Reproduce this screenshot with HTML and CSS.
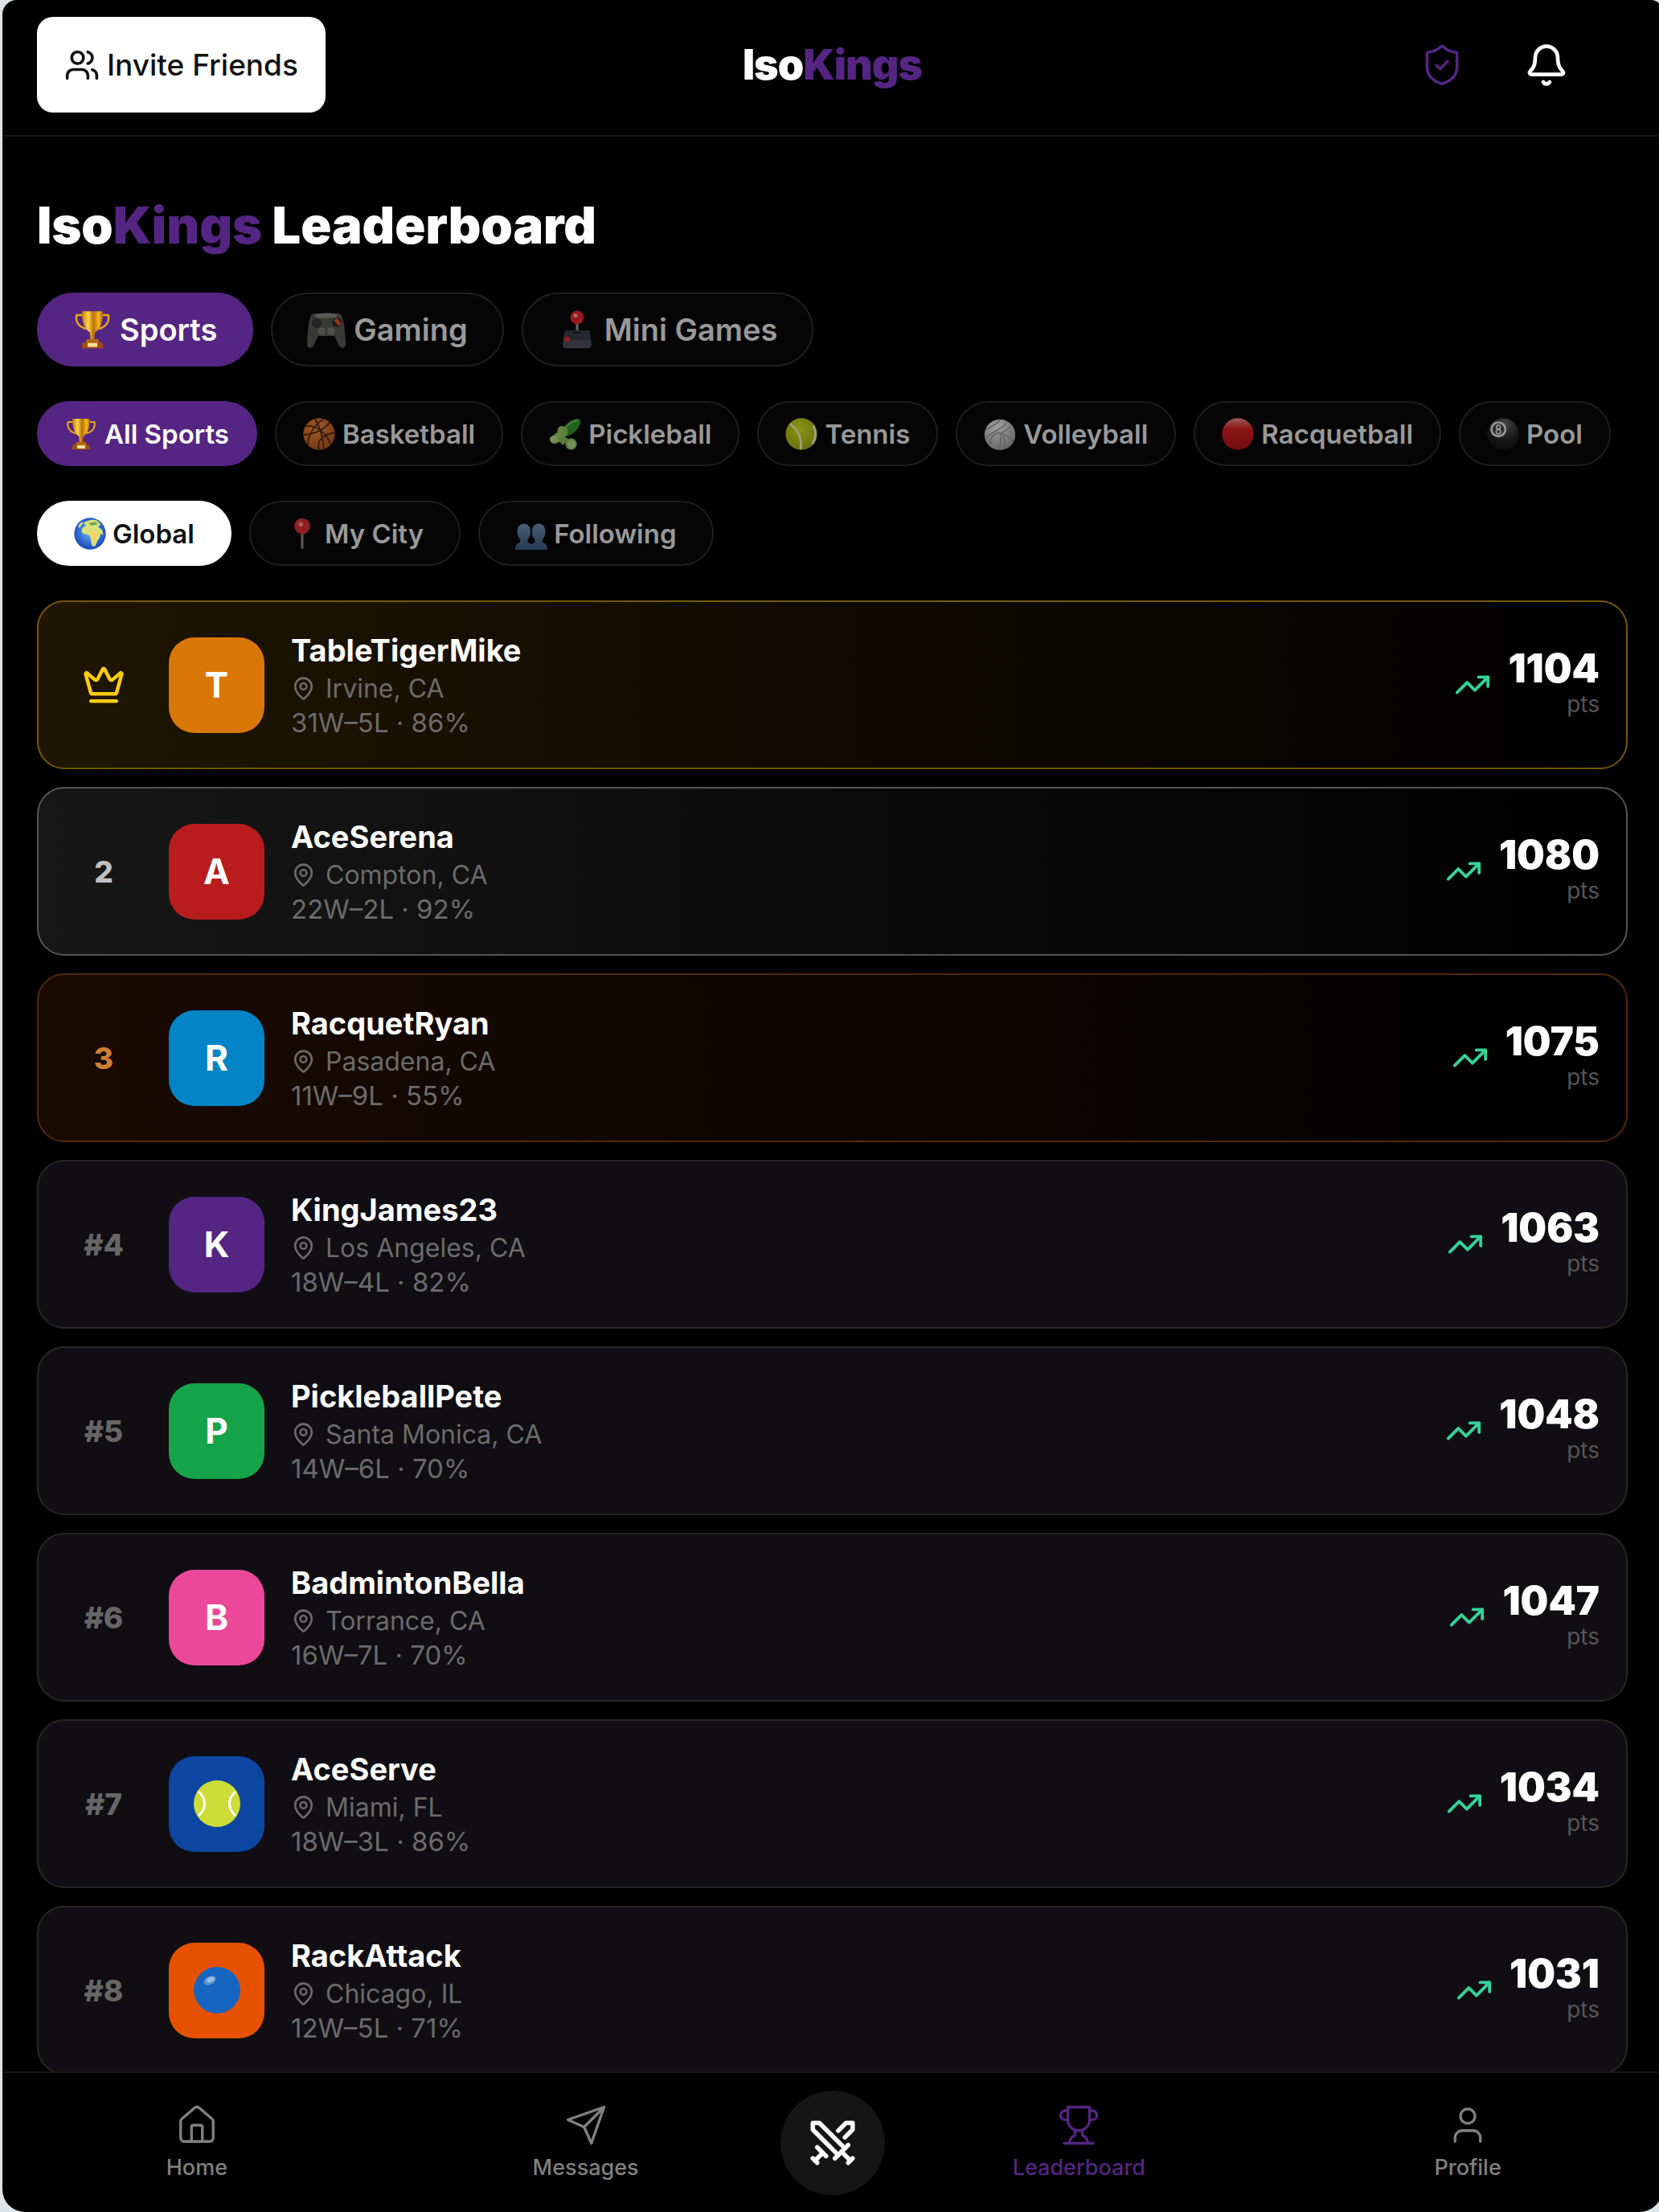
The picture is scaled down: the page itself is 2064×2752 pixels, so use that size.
FILE: index.html
```html
<!DOCTYPE html>
<html lang="en">
<head>
    <meta charset="UTF-8">
    <meta name="viewport" content="width=device-width, initial-scale=1.0">
    <title>IsoKings Leaderboard</title>
    <link rel="stylesheet" href="styles.css">
</head>
<body>

<!-- shared icons -->
<svg class="sprite" aria-hidden="true">
    <defs>
        <linearGradient id="gold" x1="0" x2="1" y1="0" y2="0">
            <stop offset="0" stop-color="#c27a06"/>
            <stop offset=".3" stop-color="#ffd54a"/>
            <stop offset=".55" stop-color="#b86f05"/>
            <stop offset=".8" stop-color="#f7b920"/>
            <stop offset="1" stop-color="#a85f04"/>
        </linearGradient>
        <linearGradient id="red" x1="0" x2="0" y1="0" y2="1">
            <stop offset="0" stop-color="#ee8a86"/>
            <stop offset=".35" stop-color="#d41c1e"/>
            <stop offset="1" stop-color="#b01014"/>
        </linearGradient>
        <linearGradient id="people" x1="0" x2="0" y1="0" y2="1">
            <stop offset="0" stop-color="#6f8fb0"/>
            <stop offset="1" stop-color="#37597b"/>
        </linearGradient>
        <radialGradient id="orange" cx=".4" cy=".35" r=".7">
            <stop offset="0" stop-color="#f08a3c"/>
            <stop offset="1" stop-color="#b2501a"/>
        </radialGradient>
        <radialGradient id="lime" cx=".45" cy=".35" r=".7">
            <stop offset="0" stop-color="#d2e21c"/>
            <stop offset="1" stop-color="#9aa812"/>
        </radialGradient>
        <radialGradient id="grey" cx=".4" cy=".25" r=".8">
            <stop offset="0" stop-color="#f2f2f2"/>
            <stop offset="1" stop-color="#9a9a9a"/>
        </radialGradient>
        <radialGradient id="black" cx=".55" cy=".2" r=".8">
            <stop offset="0" stop-color="#6a6a6a"/>
            <stop offset=".6" stop-color="#222"/>
            <stop offset="1" stop-color="#111"/>
        </radialGradient>
        <radialGradient id="ocean" cx=".5" cy=".45" r=".55">
            <stop offset="0" stop-color="#69b5ff"/>
            <stop offset="1" stop-color="#1746b8"/>
        </radialGradient>
    </defs>

    <symbol id="pin" viewBox="0 0 24 24">
        <path d="M20 10c0 4.993-5.539 10.193-7.399 11.799a1 1 0 0 1-1.202 0C9.539 20.193 4 14.993 4 10a8 8 0 0 1 16 0"/>
        <circle cx="12" cy="10" r="3"/>
    </symbol>
    <symbol id="trend" viewBox="0 0 24 24">
        <path d="M16 7h6v6"/>
        <path d="m22 7-8.500 8.500-5-5L2 17"/>
    </symbol>

    <symbol id="e-trophy" viewBox="0 0 24 24">
        <path d="M6.500 3H2.200c-.8 3.400.6 7 5.800 8.600M17.500 3h4.300c.8 3.400-.6 7-5.800 8.600" fill="none" stroke="#e8a61c" stroke-width="1.300"/>
        <path d="M5.500.6h13c.2 6.500-1.600 11-4.900 13.200l-.4 4.200h-2.400l-.4-4.200C7.100 11.600 5.300 7.100 5.500.6z" fill="url(#gold)"/>
        <path d="M8.500 18h7l1 2.500h-9z" fill="#b5680a"/>
        <path d="M6 20h12l.8 3.600H5.200z" fill="#a04f0a"/>
        <path d="M9 20.300h6v2.500H9z" fill="#ffdf9c"/>
    </symbol>
    <symbol id="e-gamepad" viewBox="0 0 24 24">
        <path d="M4.500 2h15c2.800 0 4 6 4.500 19 .1 2.800-3 3.400-4.200.8L17 16H7l-2.800 5.800C3 24.400-.1 23.800 0 21 .5 8 1.700 2 4.500 2z" fill="#55554f"/>
        <path d="M5 2.700C8 1.500 16 1.500 19 2.700l-1 2H6z" fill="#858580"/>
        <circle cx="6" cy="8" r="3" fill="#333"/>
        <circle cx="18.500" cy="7.500" r="3" fill="#2b2b2b"/>
        <circle cx="9" cy="13" r="2.400" fill="#77776f"/>
        <circle cx="15" cy="13" r="2.400" fill="#77776f"/>
        <path d="M17.500 5.500l3 3.500" stroke="#e2531b" stroke-width="2.200"/>
    </symbol>
    <symbol id="e-joystick" viewBox="0 0 24 24">
        <path d="M12 6v8" stroke="#9a9aa0" stroke-width="1.600"/>
        <path d="M4.500 12.500h15l1.500 8.500c0 1.800-.6 2.600-2 2.600H5c-1.400 0-2-.8-2-2.600z" fill="#4c4d57"/>
        <path d="M4.500 12.500h15l1 6h-17z" fill="#3a3b44"/>
        <path d="M9 14.500c0-1.600 6-1.600 6 0z" fill="#1d1d22"/>
        <circle cx="12" cy="4.500" r="4.200" fill="#e3272d"/>
        <circle cx="11" cy="3.300" r="1.300" fill="#ff9a96"/>
        <circle cx="5.800" cy="18" r="1.600" fill="#e3272d"/>
    </symbol>
    <symbol id="e-basketball" viewBox="0 0 24 24">
        <circle cx="12" cy="12" r="11.800" fill="url(#orange)"/>
        <path d="M.4 12.500C7 12.500 16 9 20 3.200M9 .6c3 5 6 13 6.500 22.800M2 6c7-1 16 5 18.500 14M3.500 20C4 13 8 6 15 .8M12 23.500C10 18 14 12 23.800 11" fill="none" stroke="#4a230d" stroke-width="1"/>
    </symbol>
    <symbol id="e-pickle" viewBox="0 0 24 24">
        <path d="M10 9.500C12 4.500 17 .5 22 .6c1.600.2 1.800 2 1.200 4C21.600 9 17 13 13 13.500z" fill="#2f8f2b"/>
        <path d="M12 8c2-3.500 6-6 9.500-6" stroke="#6cc250" stroke-width="1.200" fill="none"/>
        <path d="M9 6c3-.4 5.500 2 5 4.800-.3 2.200-1.800 3.200-2.600 4.400L6.500 12C6 9 6.500 6.500 9 6z" fill="#8cc75f"/>
        <path d="M7 10l5.500 5-6 3.500C3.500 20.500.2 18 .6 15.500c.3-2 2.200-2 3-2.800z" fill="#9fce6a"/>
        <circle cx="3.500" cy="15.500" r="2" fill="#bde08c"/>
        <path d="M9 12.500l5.500 3.300-4.300 4.700-3-4z" fill="#86bd55"/>
        <circle cx="16.500" cy="19.500" r="4.300" fill="#8cc75f"/>
        <circle cx="16.700" cy="19.700" r="2.700" fill="#b8dd86"/>
    </symbol>
    <symbol id="e-tennis" viewBox="0 0 24 24">
        <circle cx="12" cy="12" r="11.800" fill="url(#lime)"/>
        <path d="M3.500 4.500C10 9 12.500 15 11.500 23.500M21 5.500c2 4.500 1.800 9.500-.8 14" fill="none" stroke="#f0f3c8" stroke-width="1.600"/>
    </symbol>
    <symbol id="e-volleyball" viewBox="0 0 24 24">
        <circle cx="12" cy="12.500" r="11.500" fill="url(#grey)"/>
        <path d="M1 9c4-2 10-5 11-8M2 15c5-6 12-6 15-12M12 12c3-2 7-4 8-6M12 12c1 4 1 8-1 12M5 20c-1-4 1-8 7-9M12 12c4 0 9 3 10 6M15 23c1-3 1-6-1-10" fill="none" stroke="#949494" stroke-width=".9"/>
    </symbol>
    <symbol id="e-red" viewBox="0 0 24 24">
        <circle cx="12" cy="12" r="11.800" fill="url(#red)"/>
    </symbol>
    <symbol id="e-pool" viewBox="0 0 24 24">
        <circle cx="12" cy="12" r="11.800" fill="url(#black)"/>
        <circle cx="8.500" cy="8.500" r="5.200" fill="#444" stroke="#e6e6e6" stroke-width="1.600"/>
        <ellipse cx="8.500" cy="6.900" rx="1.400" ry="1.600" fill="none" stroke="#e6e6e6" stroke-width="1"/>
        <ellipse cx="8.500" cy="10.200" rx="1.600" ry="1.700" fill="none" stroke="#e6e6e6" stroke-width="1"/>
    </symbol>
    <symbol id="e-globe" viewBox="0 0 24 24">
        <circle cx="12" cy="12" r="11.800" fill="url(#ocean)"/>
        <path d="M7 4c3-2 7-3 10-2l3 3-2 2 3 2 1 4-2-1-1 3c-1 2-2 3-3 6-1 1-3 0-3-2l-1-5c-1-2-5-1-6-3-1-3 1-4 3-5z" fill="#d9e27a"/>
        <path d="M12 10l6 1-3 8-2-1z" fill="#f2d36b"/>
        <path d="M11 4l5-1 2 2-5 1z" fill="#6dab55"/>
        <path d="M3 6l3-3 1 1-3 4z" fill="#bcdc8c"/>
    </symbol>
    <symbol id="e-pushpin" viewBox="0 0 24 24">
        <path d="M12 9v13.500" stroke="#a08a86" stroke-width="1.700" stroke-linecap="round"/>
        <circle cx="12" cy="6.300" r="5.900" fill="#d92d32"/>
        <circle cx="11" cy="5" r="1.700" fill="#f58c8a"/>
    </symbol>
    <symbol id="e-people" viewBox="0 0 24 24">
        <path d="M6.500 4.500c3.100 0 5 2.600 5 6 0 2.800-1 4.600-2.200 5.700v2.300c1.500.6 2.200 1.100 2.700 1.600.5-.5 1.200-1 2.700-1.600v-2.300c-1.200-1.100-2.200-2.900-2.200-5.700 0-3.400 1.900-6 5-6s5 2.600 5 6c0 2.800-1 4.600-2.200 5.700v2.300c2.600 1 3.700 2 3.700 5.500H0c0-3.500 1.100-4.500 3.700-5.500v-2.300c-1.200-1.100-2.200-2.900-2.200-5.700 0-3.400 1.900-6 5-6z" fill="url(#people)"/>
    </symbol>
</svg>

<div class="app">

    <header class="topbar">
        <div class="topbar-side">
            <button class="invite" type="button">
                <svg class="icon" viewBox="0 0 24 24"><path d="M16 21v-2a4 4 0 0 0-4-4H6a4 4 0 0 0-4 4v2"/><circle cx="9" cy="7" r="4"/><path d="M22 21v-2a4 4 0 0 0-3-3.870"/><path d="M16 3.130a4 4 0 0 1 0 7.750"/></svg>
                Invite Friends
            </button>
        </div>
        <a class="logo" href="#">Iso<span>Kings</span></a>
        <div class="topbar-side topbar-actions">
            <button class="icon-btn shield" type="button" aria-label="Safety">
                <svg class="icon" viewBox="0 0 24 24"><path d="M20 13c0 5-3.500 7.500-7.660 8.950a1 1 0 0 1-.67-.01C7.500 20.500 4 18 4 13V6a1 1 0 0 1 1-1c2 0 4.500-1.200 6.240-2.720a1.170 1.170 0 0 1 1.520 0C14.510 3.810 17 5 19 5a1 1 0 0 1 1 1z"/><path d="m9 12 2 2 4-4"/></svg>
            </button>
            <button class="icon-btn bell" type="button" aria-label="Notifications">
                <svg class="icon" viewBox="0 0 24 24"><path d="M10.268 21a2 2 0 0 0 3.464 0"/><path d="M3.262 15.326A1 1 0 0 0 4 17h16a1 1 0 0 0 .740-1.673C19.410 13.956 18 12.499 18 8A6 6 0 0 0 6 8c0 4.499-1.411 5.956-2.738 7.326"/></svg>
            </button>
        </div>
    </header>

    <main class="content">
        <h1>Iso<span>Kings</span> Leaderboard</h1>

        <div class="chips chips-lg">
            <button class="chip on" type="button"><svg><use href="#e-trophy"/></svg>Sports</button>
            <button class="chip" type="button"><svg><use href="#e-gamepad"/></svg>Gaming</button>
            <button class="chip" type="button"><svg><use href="#e-joystick"/></svg>Mini Games</button>
        </div>

        <div class="chips chips-sport">
            <button class="chip on" type="button"><svg><use href="#e-trophy"/></svg>All Sports</button>
            <button class="chip" type="button"><svg><use href="#e-basketball"/></svg>Basketball</button>
            <button class="chip" type="button"><svg><use href="#e-pickle"/></svg>Pickleball</button>
            <button class="chip" type="button"><svg><use href="#e-tennis"/></svg>Tennis</button>
            <button class="chip" type="button"><svg><use href="#e-volleyball"/></svg>Volleyball</button>
            <button class="chip" type="button"><svg><use href="#e-red"/></svg>Racquetball</button>
            <button class="chip" type="button"><svg><use href="#e-pool"/></svg>Pool</button>
            <button class="chip" type="button" aria-label="More sports"></button>
        </div>

        <div class="chips">
            <button class="chip on-white" type="button"><svg><use href="#e-globe"/></svg>Global</button>
            <button class="chip" type="button"><svg><use href="#e-pushpin"/></svg>My City</button>
            <button class="chip" type="button"><svg><use href="#e-people"/></svg>Following</button>
        </div>

        <ol class="board">
            <li class="player gold">
                <span class="rank"><svg class="icon crown" viewBox="0 0 24 24"><path d="M11.562 3.266a.5.5 0 0 1 .876 0L15.390 8.870a1 1 0 0 0 1.516.294L21.183 5.500a.5.5 0 0 1 .798.519l-2.834 10.246a1 1 0 0 1-.956.734H5.810a1 1 0 0 1-.957-.734L2.020 6.020a.5.5 0 0 1 .798-.519l4.276 3.664a1 1 0 0 0 1.516-.294z"/><path d="M5 21h14"/></svg></span>
                <span class="avatar amber">T</span>
                <div class="info">
                    <h2>TableTigerMike</h2>
                    <p class="place"><svg class="icon"><use href="#pin"/></svg>Irvine, CA</p>
                    <p>31W–5L · 86%</p>
                </div>
                <svg class="icon trend"><use href="#trend"/></svg>
                <div class="score"><strong>1104</strong><span>pts</span></div>
            </li>
            <li class="player silver">
                <span class="rank">2</span>
                <span class="avatar red">A</span>
                <div class="info">
                    <h2>AceSerena</h2>
                    <p class="place"><svg class="icon"><use href="#pin"/></svg>Compton, CA</p>
                    <p>22W–2L · 92%</p>
                </div>
                <svg class="icon trend"><use href="#trend"/></svg>
                <div class="score"><strong>1080</strong><span>pts</span></div>
            </li>
            <li class="player bronze">
                <span class="rank">3</span>
                <span class="avatar sky">R</span>
                <div class="info">
                    <h2>RacquetRyan</h2>
                    <p class="place"><svg class="icon"><use href="#pin"/></svg>Pasadena, CA</p>
                    <p>11W–9L · 55%</p>
                </div>
                <svg class="icon trend"><use href="#trend"/></svg>
                <div class="score"><strong>1075</strong><span>pts</span></div>
            </li>
            <li class="player">
                <span class="rank">#4</span>
                <span class="avatar purple">K</span>
                <div class="info">
                    <h2>KingJames23</h2>
                    <p class="place"><svg class="icon"><use href="#pin"/></svg>Los Angeles, CA</p>
                    <p>18W–4L · 82%</p>
                </div>
                <svg class="icon trend"><use href="#trend"/></svg>
                <div class="score"><strong>1063</strong><span>pts</span></div>
            </li>
            <li class="player">
                <span class="rank">#5</span>
                <span class="avatar green">P</span>
                <div class="info">
                    <h2>PickleballPete</h2>
                    <p class="place"><svg class="icon"><use href="#pin"/></svg>Santa Monica, CA</p>
                    <p>14W–6L · 70%</p>
                </div>
                <svg class="icon trend"><use href="#trend"/></svg>
                <div class="score"><strong>1048</strong><span>pts</span></div>
            </li>
            <li class="player">
                <span class="rank">#6</span>
                <span class="avatar pink">B</span>
                <div class="info">
                    <h2>BadmintonBella</h2>
                    <p class="place"><svg class="icon"><use href="#pin"/></svg>Torrance, CA</p>
                    <p>16W–7L · 70%</p>
                </div>
                <svg class="icon trend"><use href="#trend"/></svg>
                <div class="score"><strong>1047</strong><span>pts</span></div>
            </li>
            <li class="player">
                <span class="rank">#7</span>
                <span class="avatar blue">
                    <svg viewBox="0 0 60 60"><circle cx="30" cy="30" r="29" fill="#cddc39"/><path d="M7 15c10 9 10 21 0 30M53 15c-10 9-10 21 0 30" fill="none" stroke="#fff" stroke-width="3"/></svg>
                </span>
                <div class="info">
                    <h2>AceServe</h2>
                    <p class="place"><svg class="icon"><use href="#pin"/></svg>Miami, FL</p>
                    <p>18W–3L · 86%</p>
                </div>
                <svg class="icon trend"><use href="#trend"/></svg>
                <div class="score"><strong>1034</strong><span>pts</span></div>
            </li>
            <li class="player">
                <span class="rank">#8</span>
                <span class="avatar orange">
                    <svg viewBox="0 0 60 60"><circle cx="30" cy="30" r="29" fill="#1565c0"/><ellipse cx="21" cy="18" rx="8" ry="5" transform="rotate(-25 21 18)" fill="#fff" opacity=".3"/><ellipse cx="22" cy="17" rx="5" ry="3" transform="rotate(-25 22 17)" fill="#fff" opacity=".4"/></svg>
                </span>
                <div class="info">
                    <h2>RackAttack</h2>
                    <p class="place"><svg class="icon"><use href="#pin"/></svg>Chicago, IL</p>
                    <p>12W–5L · 71%</p>
                </div>
                <svg class="icon trend"><use href="#trend"/></svg>
                <div class="score"><strong>1031</strong><span>pts</span></div>
            </li>
        </ol>
    </main>

    <nav class="tabs">
        <a class="tab" href="#">
            <svg class="icon" viewBox="0 0 24 24"><path d="M15 21v-8a1 1 0 0 0-1-1h-4a1 1 0 0 0-1 1v8"/><path d="M3 10a2 2 0 0 1 .709-1.528l7-5.999a2 2 0 0 1 2.582 0l7 5.999A2 2 0 0 1 21 10v9a2 2 0 0 1-2 2H5a2 2 0 0 1-2-2z"/></svg>
            Home
        </a>
        <a class="tab" href="#">
            <svg class="icon" viewBox="0 0 24 24"><path d="m22 2-7 20-4-9-9-4Z"/><path d="M22 2 11 13"/></svg>
            Messages
        </a>
        <button class="fab" type="button" aria-label="New challenge">
            <svg class="icon" viewBox="0 0 24 24"><path d="M14.500 17.500 3 6V3h3l11.500 11.500"/><path d="m13 19 6-6"/><path d="m16 16 4 4"/><path d="m19 21 2-2"/><path d="M14.500 6.500 18 3h3v3l-3.500 3.500"/><path d="m5 14 4 4"/><path d="m7 17-3 3"/><path d="m3 19 2 2"/></svg>
        </button>
        <a class="tab active" href="#">
            <svg class="icon" viewBox="0 0 24 24"><path d="M6 9H4.500a2.500 2.500 0 0 1 0-5H6"/><path d="M18 9h1.500a2.500 2.500 0 0 0 0-5H18"/><path d="M4 22h16"/><path d="M10 14.660V17c0 .550-.470.980-.970 1.210C7.850 18.750 7 20.240 7 22"/><path d="M14 14.660V17c0 .550.470.980.970 1.210C16.150 18.750 17 20.240 17 22"/><path d="M18 2H6v7a6 6 0 0 0 12 0V2Z"/></svg>
            Leaderboard
        </a>
        <a class="tab" href="#">
            <svg class="icon" viewBox="0 0 24 24"><path d="M19 21v-2a4 4 0 0 0-4-4H9a4 4 0 0 0-4 4v2"/><circle cx="12" cy="7" r="4"/></svg>
            Profile
        </a>
    </nav>

</div>

</body>
</html>
```
FILE: styles.css
```css
* {
    margin: 0;
    padding: 0;
    box-sizing: border-box;
}

html, body {
    height: 100%;
    overflow: hidden;
    background-color: #dde3e8;
    font-family: Inter, "Liberation Sans", sans-serif;
    color: #fff;
}

button {
    border: 0;
    background: none;
    color: inherit;
    font: inherit;
}

a {
    color: inherit;
    text-decoration: none;
}

.sprite {
    position: absolute;
    width: 0;
    height: 0;
}

.icon {
    flex: none;
    fill: none;
    stroke: currentColor;
    stroke-width: 2;
    stroke-linecap: round;
    stroke-linejoin: round;
}

.app {
    display: flex;
    flex-direction: column;
    height: 100vh;
    margin: 0 -4px 0 3px;
    background-color: #000;
    border-radius: 18px 14px 28px 28px;
    overflow: hidden;
}

/* Header */
.topbar {
    display: flex;
    align-items: center;
    flex: none;
    height: 170px;
    padding: 0 43px 7px;
    border-bottom: 2px solid #161616;
}

.topbar-side {
    flex: 1;
    display: flex;
}

.topbar-actions {
    justify-content: flex-end;
    gap: 74px;
}

.invite {
    display: flex;
    align-items: center;
    gap: 9px;
    height: 119px;
    padding: 0 34px;
    border-radius: 20px;
    background-color: #fff;
    color: #111;
    font-size: 37px;
    font-weight: 500;
}

.invite .icon {
    width: 44px;
    height: 44px;
}

.logo {
    font-size: 52px;
    font-weight: 900;
    letter-spacing: -1px;
}

.logo span,
h1 span {
    color: #552583;
}

.icon-btn {
    display: flex;
}

.icon-btn .icon {
    width: 56px;
    height: 56px;
}

.bell {
    margin-right: 73px;
}

.shield {
    color: #552583;
}

.shield .icon {
    stroke-width: 1.5;
}

/* Content */
.content {
    flex: 1;
    min-height: 0;
    overflow: hidden;
    padding: 68px 43px 0;
}

h1 {
    font-size: 63px;
    line-height: 84px;
    font-weight: 900;
    margin-bottom: 42px;
}

/* Filter chips */
.chips {
    display: flex;
    gap: 22px;
    overflow: hidden;
    margin-bottom: 43px;
}

.chip {
    display: flex;
    align-items: center;
    flex: none;
    gap: 8px;
    height: 81px;
    padding: 0 44px;
    border: 2px solid #1e1e1e;
    border-radius: 50px;
    background-color: #050505;
    color: #999;
    font-size: 33px;
    font-weight: 600;
}

.chip svg {
    width: 40px;
    height: 40px;
    opacity: 0.65;
}

.chips-lg .chip {
    gap: 10px;
    height: 92px;
    padding: 0 43px;
    font-size: 38px;
}

.chips-lg svg {
    width: 48px;
    height: 48px;
}

.chips-sport .chip {
    gap: 9px;
    padding: 0 33px;
}

.chip.on {
    background-color: #552583;
    border-color: #552583;
    color: #fff;
}

.chip.on-white {
    background-color: #fff;
    border-color: #fff;
    color: #111;
}

.chip.on svg,
.chip.on-white svg {
    opacity: 1;
}

/* Leaderboard rows */
.board {
    list-style: none;
    display: flex;
    flex-direction: column;
    gap: 22px;
}

.player {
    display: flex;
    align-items: center;
    height: 210px;
    padding: 0 33px;
    border: 2px solid #262628;
    border-radius: 34px;
    background-color: #100e13;
}

.gold {
    border-color: #755806;
    background: linear-gradient(90deg, #1f1602, #000);
}

.silver {
    border-color: #555;
    background: linear-gradient(90deg, #171717, #000);
}

.bronze {
    border-color: #53290b;
    background: linear-gradient(90deg, #1a0b02, #000);
}

.rank {
    display: flex;
    justify-content: center;
    width: 96px;
    margin-right: 33px;
    font-size: 37px;
    font-weight: 800;
    color: #666;
}

.silver .rank {
    color: #c0c0c0;
}

.bronze .rank {
    color: #cd7f32;
}

.crown {
    width: 54px;
    height: 54px;
    color: #facc15;
}

.avatar {
    display: flex;
    align-items: center;
    justify-content: center;
    flex: none;
    width: 119px;
    height: 119px;
    margin-right: 33px;
    border-radius: 32px;
    font-size: 44px;
    font-weight: 700;
}

.avatar svg {
    width: 60px;
    height: 60px;
}

.amber { background-color: #d97706; }
.red { background-color: #b91c1c; }
.sky { background-color: #0284c7; }
.purple { background-color: #552583; }
.green { background-color: #16a34a; }
.pink { background-color: #ec4899; }
.blue { background-color: #0d47a1; }
.orange { background-color: #e65100; }

.info {
    flex: 1;
    color: #6b6b6b;
    font-size: 33px;
    line-height: 43px;
}

.info h2 {
    color: #fff;
    font-size: 38px;
    line-height: 52px;
    font-weight: 700;
}

.info .place {
    display: flex;
    align-items: center;
    gap: 12px;
    font-size: 32px;
}

.place .icon {
    width: 31px;
    height: 31px;
}

.trend {
    width: 46px;
    height: 46px;
    margin-right: 21px;
    color: #34d399;
}

.score {
    display: flex;
    flex-direction: column;
    align-items: flex-end;
}

.score strong {
    font-size: 49px;
    line-height: 48px;
    font-weight: 900;
}

.score span {
    color: #555;
    font-size: 28px;
    line-height: 40px;
}

/* Bottom tabs */
.tabs {
    display: flex;
    align-items: center;
    flex: none;
    height: 175px;
    border-top: 2px solid #161616;
}

.tab {
    flex: 1;
    display: flex;
    flex-direction: column;
    align-items: center;
    gap: 8px;
    color: #808080;
    font-size: 27px;
    line-height: 36px;
    font-weight: 500;
}

.tab .icon {
    width: 54px;
    height: 54px;
    stroke-width: 1.5;
}

.tab.active {
    color: #552583;
}

.fab {
    display: flex;
    align-items: center;
    justify-content: center;
    flex: none;
    width: 130px;
    height: 130px;
    border-radius: 50%;
    background-color: #151515;
}

.fab .icon {
    width: 66px;
    height: 66px;
}
```
